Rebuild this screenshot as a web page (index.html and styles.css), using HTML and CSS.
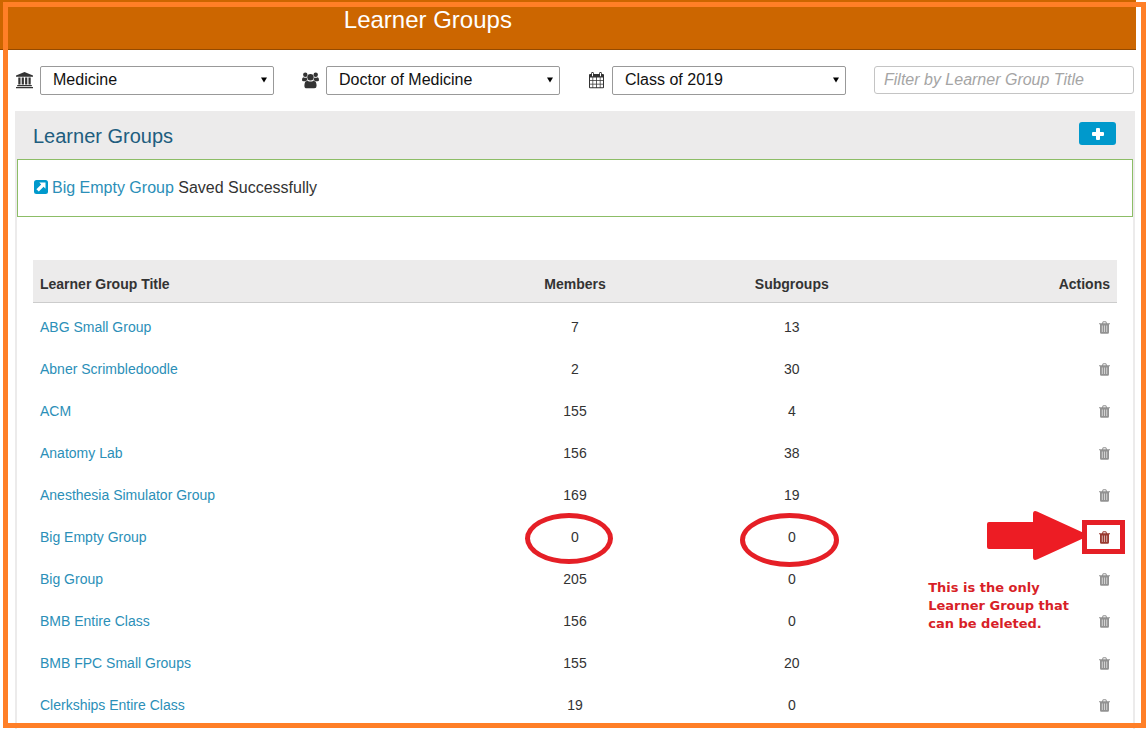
FILE: index.html
```html
<!DOCTYPE html>
<html lang="en">
<head>
<meta charset="utf-8">
<title>Learner Groups</title>
<link rel="stylesheet" href="styles.css">
</head>
<body>
<svg class="sprite" aria-hidden="true">
  <symbol id="trash" viewBox="0 0 11 13">
    <path d="M3 2.200 3.600.8Q3.800.3 4.400.3h2.200q.6 0 .8.5L8 2.200h3V3.200H10v8q0 1.500-1.300 1.500H2.300Q1 12.700 1 11.200v-8H0V2.200zM4.100 2.200h2.800l-.4-.9H4.500z" fill-rule="evenodd"/>
    <path fill="#fff" fill-opacity=".6" d="M2.800 4.500h1v6.500h-1zM5 4.500h1v6.500H5zM7.200 4.500h1v6.500h-1z"/>
  </symbol>
  <symbol id="caret" viewBox="0 0 7 6"><path d="M0 0h7L3.500 6z"/></symbol>
</svg>
<div class="page">
  <header class="banner"><h1 class="banner-title">Learner Groups</h1></header>
  <main class="content">
    <form class="filters">
      <div class="filter">
        <label for="school" aria-label="School"><svg class="icon" viewBox="0 0 17 17"><path d="M8.500 0 17 3.500v1.200H0V3.500zM2.300 5.500h2.200v7H2.300zM5.700 5.500h2.200v7H5.700zM9.100 5.500h2.200v7H9.100zM12.500 5.500h2.200v7h-2.200zM1.200 13h14.600v1.200H1.200zM0 15h17v1.300H0z"/></svg></label>
        <div class="select-box"><select id="school"><option>Medicine</option></select><svg class="caret"><use href="#caret"/></svg></div>
      </div>
      <div class="filter">
        <label for="program" aria-label="Program"><svg class="icon" viewBox="0 0 17 17"><circle cx="3.300" cy="2.800" r="2.200"/><circle cx="13.700" cy="2.800" r="2.200"/><circle cx="8.500" cy="5.300" r="3.200"/><path d="M1.500 5.200q1.800 1 3.300.2 0 1.800.9 2.900-1.200 0-2 .9H1.400Q0 9.200 0 8q0-2.800 1.500-2.800zM15.500 5.200q-1.800 1-3.300.2 0 1.800-.9 2.900 1.200 0 2 .9h2.300Q17 9.200 17 8q0-2.800-1.500-2.800zM5.500 8.700q3 1.800 6 0 3.100.2 3.100 5 0 2.600-2.300 2.600H4.700q-2.300 0-2.300-2.600 0-4.800 3.100-5z"/></svg></label>
        <div class="select-box"><select id="program"><option>Doctor of Medicine</option></select><svg class="caret"><use href="#caret"/></svg></div>
      </div>
      <div class="filter">
        <label for="cohort" aria-label="Cohort"><svg class="icon" viewBox="0 0 17 17"><path fill-rule="evenodd" d="M2 2H3.200V1Q3.200 0 4.500 0T5.800 1v1h5.400V1q0-1 1.300-1t1.300 1v1h1.200q1 0 1 1v12.300q0 1-1 1H2q-1 0-1-1V3q0-1 1-1zM4 1v3.200h1V1zM12 1v3.200h1V1zM2 5.500v2.800h2.500V5.500zM5.200 5.500v2.800h2.900V5.500zM8.900 5.500v2.800h2.900V5.500zM12.500 5.500v2.800H15V5.500zM2 9v2.700h2.500V9zM5.200 9v2.700h2.900V9zM8.900 9v2.700h2.900V9zM12.500 9v2.700H15V9zM2 12.500v2.800h2.500v-2.800zM5.200 12.500v2.800h2.900v-2.800zM8.900 12.500v2.800h2.900v-2.800zM12.500 12.500v2.800H15v-2.800z"/></svg></label>
        <div class="select-box"><select id="cohort"><option>Class of 2019</option></select><svg class="caret"><use href="#caret"/></svg></div>
      </div>
      <input class="search" type="text" aria-label="Filter by Learner Group Title" placeholder="Filter by Learner Group Title">
    </form>

    <section class="panel">
      <div class="panel-head">
        <h2 class="panel-title">Learner Groups</h2>
        <button class="add" type="button" aria-label="Add learner group"><svg viewBox="0 0 12 12"><path d="M5 0h2q1 0 1 1v3h3q1 0 1 1v2q0 1-1 1H8v3q0 1-1 1H5q-1 0-1-1V8H1Q0 8 0 7V5q0-1 1-1h3V1q0-1 1-1z"/></svg></button>
      </div>
      <p class="notice"><svg class="link-icon" viewBox="0 0 14 14"><rect width="14" height="14" rx="2.500" fill="#09c"/><path fill="#fff" d="M5.300 2.500h6.200v6.200L9.600 6.800l-4.800 4.800-2.400-2.400 4.800-4.800z"/></svg><a href="#">Big Empty Group</a> Saved Successfully</p>
      <table class="groups">
        <thead><tr><th class="title">Learner Group Title</th><th>Members</th><th>Subgroups</th><th class="actions">Actions</th></tr></thead>
        <tbody>
          <tr><td class="title"><a href="#">ABG Small Group</a></td><td>7</td><td>13</td><td class="actions"><button class="delete" aria-label="Delete"><svg><use href="#trash"/></svg></button></td></tr>
          <tr><td class="title"><a href="#">Abner Scrimbledoodle</a></td><td>2</td><td>30</td><td class="actions"><button class="delete" aria-label="Delete"><svg><use href="#trash"/></svg></button></td></tr>
          <tr><td class="title"><a href="#">ACM</a></td><td>155</td><td>4</td><td class="actions"><button class="delete" aria-label="Delete"><svg><use href="#trash"/></svg></button></td></tr>
          <tr><td class="title"><a href="#">Anatomy Lab</a></td><td>156</td><td>38</td><td class="actions"><button class="delete" aria-label="Delete"><svg><use href="#trash"/></svg></button></td></tr>
          <tr><td class="title"><a href="#">Anesthesia Simulator Group</a></td><td>169</td><td>19</td><td class="actions"><button class="delete" aria-label="Delete"><svg><use href="#trash"/></svg></button></td></tr>
          <tr>
            <td class="title"><a href="#">Big Empty Group</a></td>
            <td>0<span class="ring ring-members"></span></td>
            <td>0<span class="ring ring-subgroups"></span></td>
            <td class="actions">
              <button class="delete enabled" aria-label="Delete"><svg><use href="#trash"/></svg></button>
              <svg class="arrow" viewBox="0 0 97 49"><path d="M2 11h44V3q0-4 4-2.500L97 22v5L50 48.500Q46 50 46 46v-8H2q-2 0-2-2V13q0-2 2-2z"/></svg>
              <span class="box"></span>
              <strong class="note">This is the only<br>Learner Group that<br>can be deleted.</strong>
            </td>
          </tr>
          <tr><td class="title"><a href="#">Big Group</a></td><td>205</td><td>0</td><td class="actions"><button class="delete" aria-label="Delete"><svg><use href="#trash"/></svg></button></td></tr>
          <tr><td class="title"><a href="#">BMB Entire Class</a></td><td>156</td><td>0</td><td class="actions"><button class="delete" aria-label="Delete"><svg><use href="#trash"/></svg></button></td></tr>
          <tr><td class="title"><a href="#">BMB FPC Small Groups</a></td><td>155</td><td>20</td><td class="actions"><button class="delete" aria-label="Delete"><svg><use href="#trash"/></svg></button></td></tr>
          <tr><td class="title"><a href="#">Clerkships Entire Class</a></td><td>19</td><td>0</td><td class="actions"><button class="delete" aria-label="Delete"><svg><use href="#trash"/></svg></button></td></tr>
        </tbody>
      </table>
    </section>
  </main>
</div>
<div class="frame"></div>
</body>
</html>
```
FILE: styles.css
```css
* { box-sizing: border-box; }
body {
  margin: 0;
  background: #fff;
  color: #333;
  font: 16px/24px "Liberation Sans", Arial, sans-serif;
}
a { color: #2b8fb8; text-decoration: none; }
.sprite { position: absolute; width: 0; height: 0; }

.page {
  display: flex;
  flex-direction: column;
  min-height: 100vh;
  padding-right: 11px;
}
.banner {
  height: 50px;
  padding: 6px 15px 0;
  padding-left: calc(30% + 3px);
  background: #c60;
  border-bottom: 1px solid #944a00;
}
.banner-title {
  margin: 0;
  color: #fff;
  font-size: 24px;
  font-weight: 400;
  line-height: 28px;
}
.content {
  flex: 1;
  display: flex;
  flex-direction: column;
  padding: 16px 1px 0 15px;
}

.filters {
  display: grid;
  grid-template-columns: 1fr 1fr 1fr 260px;
  column-gap: 28px;
  align-items: start;
  margin: 0 1px 16px;
}
.filter { display: flex; align-items: center; gap: 7px; }
.filter label { display: flex; }
.icon { width: 17px; height: 17px; fill: #333; }
.select-box { position: relative; flex: 1; display: flex; }
.select-box select {
  appearance: none;
  width: 100%;
  height: 29px;
  padding: 0 24px 2px 12px;
  border: 1px solid #999;
  border-radius: 2px;
  background: #fff;
  color: #111;
  font: inherit;
}
.caret {
  position: absolute;
  right: 7px;
  top: 11px;
  width: 6px;
  height: 6px;
  pointer-events: none;
}
.search {
  width: 100%;
  height: 28px;
  padding: 0 9px;
  border: 1px solid #c4c4c4;
  border-radius: 3px;
  font: inherit;
}
.search::placeholder { color: #a5a5a5; font-style: italic; }

.panel {
  flex: 1;
  border: 2px solid #ecebeb;
  border-width: 0 2px;
  padding-bottom: 6px;
}
.panel-head {
  display: flex;
  justify-content: space-between;
  align-items: center;
  height: 48px;
  padding: 0 17px 3px 16px;
  background: #ecebeb;
}
.panel-title {
  margin: 0;
  padding-top: 4px;
  color: #205d7e;
  font-size: 20px;
  font-weight: 400;
}
.add {
  display: flex;
  align-items: center;
  justify-content: center;
  width: 37px;
  height: 23px;
  padding: 0;
  border: 0;
  border-radius: 3px;
  background: #09c;
}
.add svg { width: 12px; height: 12px; fill: #fff; }
.notice {
  margin: 0;
  padding: 16px 15px;
  border: 1px solid #8cbd66;
}
.link-icon {
  width: 14px;
  height: 14px;
  margin: 0 4px 0 1px;
  vertical-align: -1px;
}

.groups {
  width: calc(100% - 32px);
  margin: 43px 16px 0;
  border-collapse: separate;
  border-spacing: 0;
  table-layout: fixed;
  font-size: 14px;
  line-height: 18px;
}
.groups th, .groups td {
  position: relative;
  width: 20%;
  padding: 15px 7px 9px;
  text-align: center;
}
.groups th { background: #ecebeb; border-bottom: 1px solid #ccc; }
.groups .title { width: 40%; text-align: left; }
.groups .actions { text-align: right; }
.delete {
  width: 11px;
  height: 13px;
  padding: 0;
  border: 0;
  background: none;
  vertical-align: -2px;
  line-height: 0;
}
.delete svg { width: 11px; height: 13px; fill: #929292; }
.delete.enabled svg { fill: #993a30; }

.ring {
  position: absolute;
  border: 5px solid #e51f26;
  border-radius: 50%;
}
.ring-members { left: calc(50% - 50px); top: 0; width: 88px; height: 51px; }
.ring-subgroups { left: calc(50% - 52px); top: 0; width: 99px; height: 54px; }
.box {
  position: absolute;
  right: -8px;
  top: 7px;
  width: 43px;
  height: 34px;
  border: 5px solid #e51f26;
}
.arrow {
  position: absolute;
  right: 33px;
  top: -2px;
  width: 97px;
  height: 49px;
  fill: #ed1c24;
}
.note {
  position: absolute;
  left: 28px;
  top: 66px;
  color: #d81f28;
  font-family: "DejaVu Sans", sans-serif;
  font-size: 13px;
  font-weight: 700;
  text-align: left;
  white-space: nowrap;
}
.frame {
  position: fixed;
  inset: 2px 1px 1px 3px;
  border: 5px solid #ff7f27;
  pointer-events: none;
}
```
